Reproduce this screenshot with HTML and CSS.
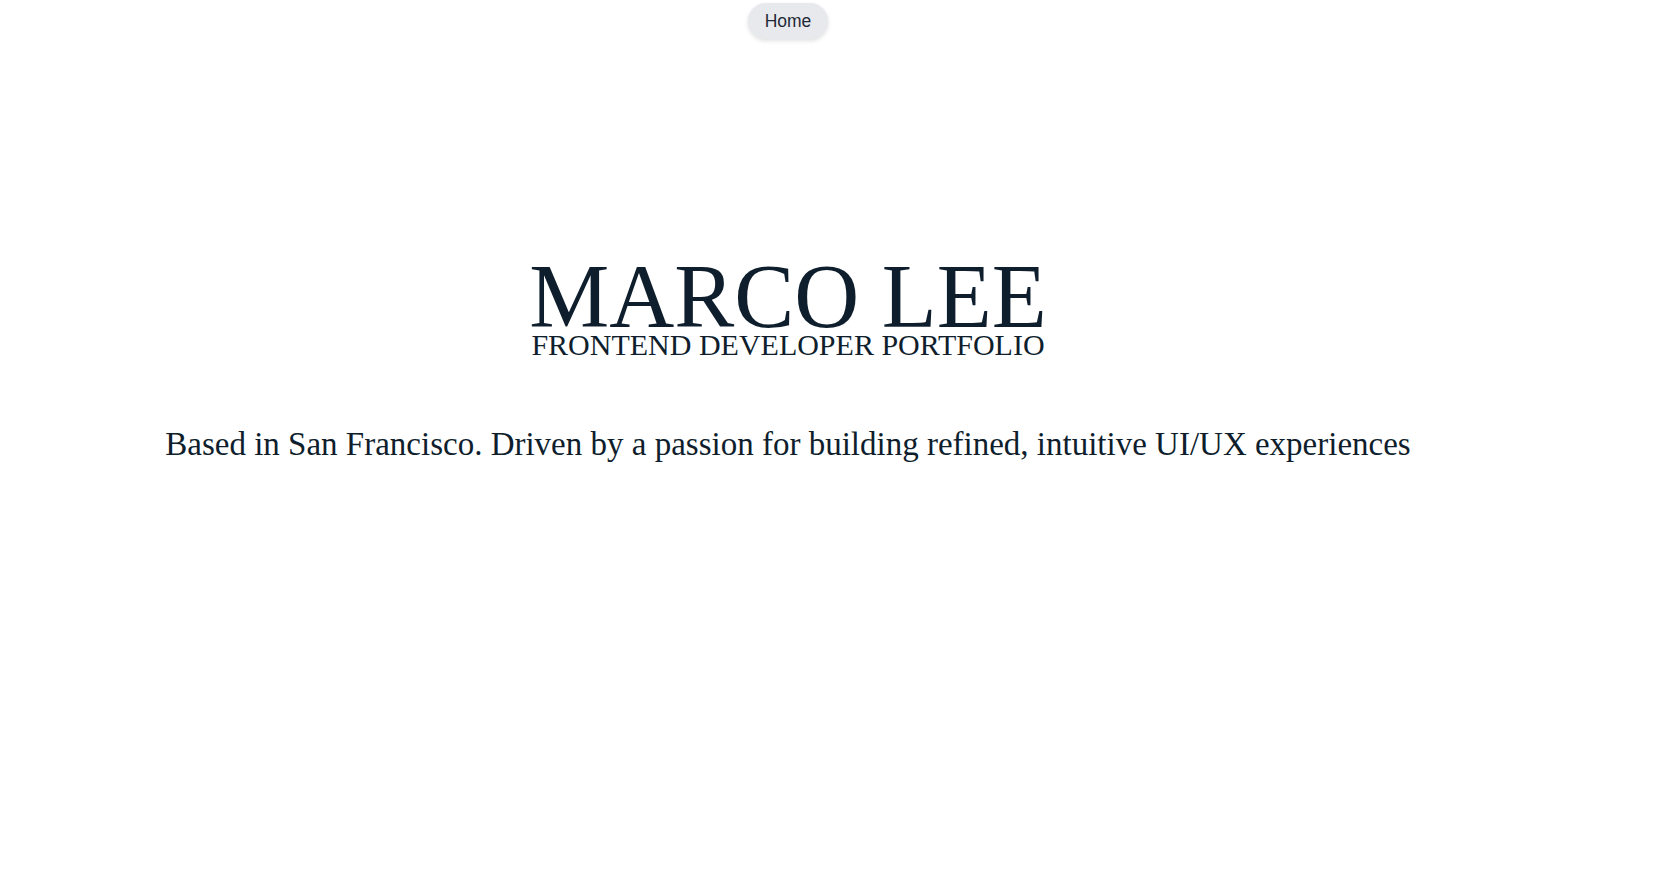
FILE: index.html
```html
<!DOCTYPE html>
<html lang="en">
<head>
<meta charset="utf-8">
<title>Marco Lee — Frontend Developer Portfolio</title>
<link rel="stylesheet" href="styles.css">
</head>
<body>
<div class="page">
  <nav class="nav">
    <a class="nav-pill" href="#">Home</a>
  </nav>
  <header class="hero">
    <h1 class="hero-title">MARCO LEE</h1>
    <div class="hero-subtitle">FRONTEND DEVELOPER PORTFOLIO</div>
  </header>
  <p class="intro">Based in San Francisco. Driven by a passion for building refined, intuitive UI/UX experiences</p>
</div>
</body>
</html>
```

FILE: styles.css
```css
html, body {
  margin: 0;
  padding: 0;
  background: #ffffff;
}

body {
  font-family: "Liberation Serif", "Times New Roman", serif;
  color: #0f1e2d;
}

.page {
  padding-right: 79px;
  min-height: 873px;
  box-sizing: border-box;
}

.nav {
  display: flex;
  justify-content: center;
  padding-top: 3px;
}

.nav-pill {
  display: inline-block;
  font-family: "Liberation Sans", Arial, sans-serif;
  font-size: 17.5px;
  line-height: 21px;
  color: #1f2937;
  text-decoration: none;
  padding: 8px 17px 7px;
  background: #e8e9ed;
  border-radius: 9999px;
  box-shadow: 0 2px 4px rgba(0, 0, 0, 0.12);
}

.hero {
  margin-top: 222px;
  display: flex;
  flex-direction: column;
  align-items: center;
}

.hero-title {
  margin: 0;
  font-size: 90px;
  line-height: 72px;
  font-weight: 400;
  color: #0f1e2d;
}

.hero-subtitle {
  font-size: 30px;
  line-height: 23px;
  color: #0f1e2d;
}

.intro {
  margin: 69px 0 0;
  text-align: center;
  font-size: 33px;
  line-height: 38px;
  color: #0f1e2d;
}
```
